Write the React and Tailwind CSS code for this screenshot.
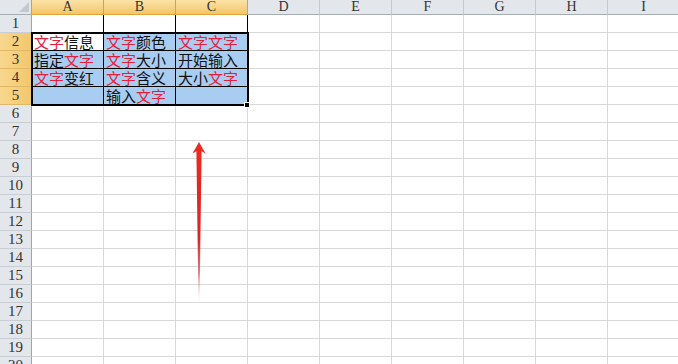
import React from 'react';

const COLS = ['A', 'B', 'C', 'D', 'E', 'F', 'G', 'H', 'I'];
const ROWS = Array.from({ length: 20 }, (_, i) => i + 1);

// r: red text
const DATA = {
  2: [
    [{ t: '文字', r: true }, { t: '信息' }],
    [{ t: '文字', r: true }, { t: '颜色' }],
    [{ t: '文字文字', r: true }],
  ],
  3: [
    [{ t: '指定' }, { t: '文字', r: true }],
    [{ t: '文字', r: true }, { t: '大小' }],
    [{ t: '开始输入' }],
  ],
  4: [
    [{ t: '文字', r: true }, { t: '变红' }],
    [{ t: '文字', r: true }, { t: '含义' }],
    [{ t: '大小' }, { t: '文字', r: true }],
  ],
  5: [[], [{ t: '输入' }, { t: '文字', r: true }], []],
};

function ColHeader({ label, selected }) {
  return (
    <div
      className={
        selected
          ? "flex items-center justify-center border-r border-r-[#c9a35a] border-b border-b-[#e3a13a] bg-linear-to-b from-[#fbe3a8] to-[#f3c666] text-[#333] text-[14px] leading-none font-['Liberation_Serif']"
          : "flex items-center justify-center border-r border-r-[#c4cad2] border-b border-b-[#a7adb5] bg-[#e3e7ec] text-[#333] text-[14px] leading-none font-['Liberation_Serif']"
      }
    >
      {label}
    </div>
  );
}

function RowHeader({ n, selected }) {
  return (
    <div
      className={
        selected
          ? "flex items-center justify-center border-r border-r-[#e3a13a] border-b border-b-[#e0b868] bg-linear-to-r from-[#f8d88f] to-[#f3c768] text-[#333] text-[15px] leading-none font-['Liberation_Serif']"
          : "flex items-center justify-center border-r border-r-[#9ea5ad] border-b border-b-[#c9ced5] bg-[#e3e7ec] text-[#333] text-[15px] leading-none font-['Liberation_Serif']"
      }
    >
      {n}
    </div>
  );
}

function Cell({ row, col }) {
  const bordered = col < 3 && row <= 5;
  const blue = col < 3 && row >= 2 && row <= 5 && !(row === 2 && col === 0);
  const parts = (DATA[row] && DATA[row][col]) || [];
  let cls = "flex items-center pl-[2px] overflow-hidden whitespace-nowrap text-[15px] leading-[17px] text-[#111] font-['Noto_Sans_CJK_SC'] border-r border-b";
  cls += bordered ? ' border-black' : ' border-[#d9d9d9]';
  cls += blue ? ' bg-[#a9cdf1]' : ' bg-white';
  return (
    <div className={cls}>
      {parts.map((p, i) => (
        <span key={i} className={p.r ? 'text-[#e3203c]' : ''}>
          {p.t}
        </span>
      ))}
    </div>
  );
}

export default function App() {
  return (
    <div className="relative w-[678px] h-[364px] overflow-hidden bg-white">
      <div className="grid grid-cols-[32px_repeat(9,72px)] grid-rows-[15px_repeat(20,18px)]">
        {/* corner */}
        <div className="relative border-r border-r-[#9ea5ad] border-b border-b-[#a7adb5] bg-[#e3e7ec]">
          <svg className="absolute right-[2px] bottom-[2px]" width="10" height="10" viewBox="0 0 10 10">
            <polygon points="10,0 10,10 0,10" fill="#c3c8cf" />
          </svg>
        </div>
        {COLS.map((c, i) => (
          <ColHeader key={c} label={c} selected={i < 3} />
        ))}
        {ROWS.map((r) => (
          <React.Fragment key={r}>
            <RowHeader n={r} selected={r >= 2 && r <= 5} />
            {COLS.map((c, i) => (
              <Cell key={c} row={r} col={i} />
            ))}
          </React.Fragment>
        ))}
      </div>

      {/* selection A2:C5 */}
      <div className="absolute left-[31px] top-[32px] w-[218px] h-[74px] border-2 border-black pointer-events-none" />
      <div className="absolute left-[244px] top-[102px] w-[6px] h-[6px] bg-black border border-white" />

      {/* red arrow */}
      <svg className="absolute left-[187px] top-[138px]" width="24" height="170" viewBox="0 0 24 170">
        <defs>
          <linearGradient id="shaft" x1="0" y1="4" x2="0" y2="166" gradientUnits="userSpaceOnUse">
            <stop offset="0" stopColor="#ee2a1f" />
            <stop offset="0.6" stopColor="#d9261f" />
            <stop offset="0.8" stopColor="#e05a5a" stopOpacity="0.85" />
            <stop offset="1" stopColor="#f2b5b5" stopOpacity="0" />
          </linearGradient>
        </defs>
        <path d="M12 4 L18.5 15.5 L14.6 13.2 L12.5 166 L11.5 166 L9.4 13.2 L5.5 15.5 Z" fill="url(#shaft)" />
      </svg>
    </div>
  );
}
